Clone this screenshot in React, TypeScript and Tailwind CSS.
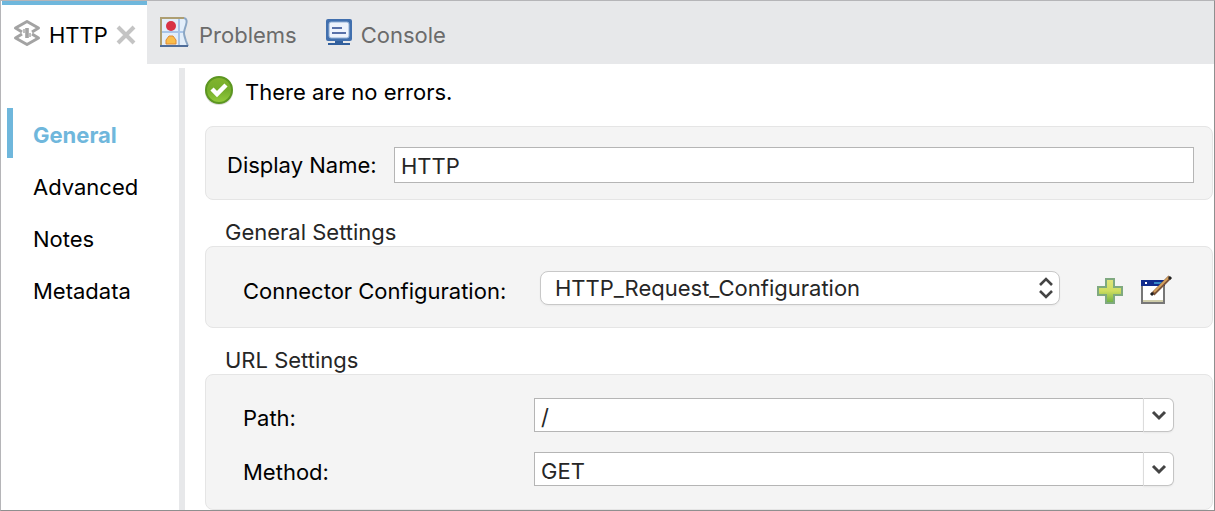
import React, { useState } from 'react';

function LayersIcon() {
  return (
    <svg className="h-7 w-7 shrink-0" viewBox="0 0 28 28" fill="none" stroke="#a3a3a3" strokeWidth="3" strokeLinejoin="round" aria-hidden="true">
      <path d="M9 13 2.500 9 14 2.500 25.500 9 19 13" />
      <path d="M9 15 2.500 19 14 25.500 25.500 19 19 15" />
      <path d="M14 9v10" strokeWidth="3.600" />
      <path d="M11 10v4M17 14v4" strokeWidth="1.400" />
    </svg>
  );
}

function CloseIcon() {
  return (
    <svg className="h-5 w-5" viewBox="0 0 20 20" stroke="#c4c4c4" strokeWidth="4" aria-hidden="true">
      <path d="M2 2 18 18M18 2 2 18" />
    </svg>
  );
}

function ProblemsIcon() {
  return (
    <svg className="h-8 w-8 shrink-0" viewBox="0 0 32 32" aria-hidden="true">
      <path d="M2 1h23q4 1 2 7t-2 8 2 8l2 5H2z" fill="#e3eefa" />
      <path d="M20 2v26M3 15h22" stroke="#a9c5e8" strokeWidth="2" />
      <path d="M2 30V1h23" fill="none" stroke="#ad9e72" strokeWidth="2" />
      <path d="M25 1q4 1 2 7t-2 8 2 8l2 5" fill="none" stroke="#8ba6c4" strokeWidth="2" />
      <path d="M1 29h28" stroke="#4f6d9a" strokeWidth="2" />
      <circle cx="12" cy="9" r="5" fill="#d83346" />
      <path d="M7 27v-4l3-4h4l3 4v4z" fill="#f9bd4b" stroke="#e08a35" />
    </svg>
  );
}

function ConsoleIcon() {
  return (
    <svg className="h-7 w-7 shrink-0" viewBox="0 0 28 28" aria-hidden="true">
      <rect x="1" y="0" width="26" height="22" rx="2" fill="#416fae" />
      <rect x="4" y="3" width="20" height="16" rx="2" fill="#eef3fd" stroke="#91afd5" />
      <path d="M7 9h10M7 14h14" stroke="#5870a9" strokeWidth="2" />
      <path d="M10 22h8v2h7v2H3v-2h7z" fill="#315f9d" />
    </svg>
  );
}

function SuccessIcon() {
  return (
    <svg className="h-8 w-8 shrink-0" viewBox="0 0 32 32" aria-hidden="true">
      <defs>
        <linearGradient id="success" x2="0" y2="1">
          <stop stopColor="#83b52f" />
          <stop offset=".5" stopColor="#74ad2b" />
          <stop offset="1" stopColor="#94cc3c" />
        </linearGradient>
      </defs>
      <ellipse cx="16" cy="18" rx="14" ry="13" fill="#bbb" opacity=".5" />
      <circle cx="16" cy="16" r="13" fill="url(#success)" stroke="#5c9621" strokeWidth="2" />
      <path d="m9 15 5 5 9-9" fill="none" stroke="white" strokeWidth="4.500" />
    </svg>
  );
}

function PlusIcon() {
  return (
    <svg className="h-7 w-7" viewBox="0 0 28 28" aria-hidden="true">
      <defs>
        <linearGradient id="plus" x2="0" y2="1">
          <stop stopColor="#e0e57c" />
          <stop offset=".5" stopColor="#cfdd60" />
          <stop offset="1" stopColor="#69b043" />
        </linearGradient>
      </defs>
      <path d="M10 2h8v8h8v8h-8v8h-8v-8H2v-8h8z" fill="url(#plus)" stroke="#7fa97f" strokeWidth="2" />
    </svg>
  );
}

function EditIcon() {
  return (
    <svg className="h-8 w-8" viewBox="0 0 32 32" aria-hidden="true">
      <path d="M2 7h22v21H2z" fill="#fff" stroke="#777" strokeWidth="2" />
      <path d="M3 25h20v2H3z" fill="#cecca9" />
      <path d="M1 5h24v6H1z" fill="#112c8d" />
      <path d="M14 7h10v2H14z" fill="#3688c6" />
      <path d="M5 7h2v2H5z" fill="#fff" />
      <path d="M13 19 30 2" stroke="#7a5238" strokeWidth="4" />
      <path d="M14 17 29 2" stroke="#d5a15d" strokeWidth="2" />
      <path d="m11 20 2-2M29 4l2-2" stroke="#222" strokeWidth="3" />
    </svg>
  );
}

function Chevron() {
  return (
    <svg className="h-4 w-4" viewBox="0 0 16 16" fill="none" stroke="#444" strokeWidth="3" aria-hidden="true">
      <path d="m2 5 6 6 6-6" />
    </svg>
  );
}

function ComboBox({ id, label, initial }: { id: string; label: string; initial: string }) {
  const [value, setValue] = useState(initial);
  return (
    <div className="flex items-center">
      <label htmlFor={id} className="w-[291px] shrink-0 pt-[6px]">{label}</label>
      <div className="flex h-[34px] min-w-0 grow">
        <input
          id={id}
          value={value}
          onChange={(e) => setValue(e.target.value)}
          className="min-w-0 grow border border-r-0 border-[#b5b5b5] bg-white px-[6px] pt-1 text-[#262626] outline-none"
        />
        <button
          aria-label={`${label} options`}
          className="flex w-[31px] shrink-0 items-center justify-center rounded-r-md border border-[#c4c4c4] border-l-[#dcdcdc] bg-white shadow-xs"
        >
          <Chevron />
        </button>
      </div>
    </div>
  );
}

const pages = ['General', 'Advanced', 'Notes', 'Metadata'];

export default function App() {
  const [page, setPage] = useState('General');
  const [name, setName] = useState('HTTP');
  return (
    <div className="flex min-h-screen flex-col border border-t-[#b5b5b8] border-r-[#8f8f8f] border-b-[#8f8f8f] border-l-[#b5b5b8] bg-white pl-px font-[Inter,sans-serif] text-[22px] leading-7 text-black">
      <header className="flex h-[63px] shrink-0 items-stretch bg-[#e7e8ea] text-[#6b6b6b]">
        <div className="flex w-[145px] items-center border-t-4 border-[#6fb7dc] bg-white pb-1 pl-[11px] text-black">
          <LayersIcon />
          <button className="ml-2 pt-1">HTTP</button>
          <button aria-label="Close HTTP" className="ml-2 pt-1"><CloseIcon /></button>
        </div>
        <button className="ml-3 flex items-center gap-2"><ProblemsIcon /><span className="pt-1">Problems</span></button>
        <button className="ml-7 flex items-center gap-2"><ConsoleIcon /><span className="pt-1">Console</span></button>
      </header>
      <div className="flex grow pt-1">
        <nav className="w-[177px] shrink-0 pt-10 pl-[5px]">
          {pages.map((p) => (
            <button
              key={p}
              onClick={() => setPage(p)}
              className={
                p === page
                  ? 'mb-[2px] flex h-[50px] w-full items-center border-l-6 border-[#6fb7dc] pt-1 pl-5 font-bold text-[#6fb7dc]'
                  : 'mb-[2px] flex h-[50px] w-full items-center border-l-6 border-transparent pt-1 pl-5'
              }
            >
              {p}
            </button>
          ))}
        </nav>
        <main className="min-w-0 grow border-l-6 border-[#e7e8ea] pt-[6px] pr-px pl-5">
          <div className="-ml-0.5 flex h-8 items-center gap-[10px]"><SuccessIcon /><p className="pt-1">There are no errors.</p></div>
          <section className="mt-[20px] flex h-[74px] items-center rounded-lg border border-[#e5e5e5] bg-[#f4f4f4] pt-1 pr-[18px] pl-[21px]">
            <label htmlFor="name" className="w-[167px] shrink-0">Display Name:</label>
            <input
              id="name"
              value={name}
              onChange={(e) => setName(e.target.value)}
              className="h-9 min-w-0 grow border border-[#b5b5b5] bg-white px-[6px] pt-0.5 text-[#262626] outline-none"
            />
          </section>
          <h2 className="mt-[18px] pl-5 text-[#262626]">General Settings</h2>
          <section className="flex h-[82px] items-center rounded-lg border border-[#e5e5e5] bg-[#f4f4f4] pt-1 pr-10 pl-[37px]">
            <label htmlFor="config" className="w-[297px] shrink-0 pt-1">Connector Configuration:</label>
            <div className="grid min-w-0 grow pb-0.5">
              <select
                id="config"
                className="col-start-1 row-start-1 h-[34px] w-full appearance-none rounded-lg border border-[#c8c8c8] bg-white pl-[14px] text-[#262626] shadow-xs outline-none"
              >
                <option>HTTP_Request_Configuration</option>
              </select>
              <svg className="pointer-events-none col-start-1 row-start-1 mr-1 h-6 w-5 place-self-center justify-self-end" viewBox="0 0 20 24" fill="none" stroke="#444" strokeWidth="2.600" aria-hidden="true">
                <path d="m4 9 6-6 6 6M4 15l6 6 6-6" />
              </svg>
            </div>
            <button aria-label="Add configuration" className="ml-9 pt-1"><PlusIcon /></button>
            <button aria-label="Edit configuration" className="ml-4 pt-1"><EditIcon /></button>
          </section>
          <h2 className="mt-[18px] pl-5 text-[#262626]">URL Settings</h2>
          <section className="flex flex-col gap-5 rounded-lg border border-[#e5e5e5] bg-[#f4f4f4] py-[23px] pr-[38px] pl-[37px]">
            <ComboBox id="path" label="Path:" initial="/" />
            <ComboBox id="method" label="Method:" initial="GET" />
          </section>
        </main>
      </div>
    </div>
  );
}
